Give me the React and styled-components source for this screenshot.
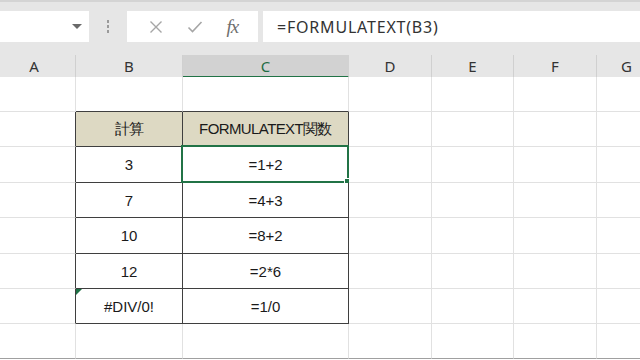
import React from "react";
import styled, { createGlobalStyle } from "styled-components";

const GlobalStyle = createGlobalStyle`
  html, body {
    margin: 0;
    padding: 0;
    background: #ffffff;
    overflow: hidden;
  }
  #root {
    width: 640px;
    height: 360px;
    overflow: hidden;
  }
`;

const Page = styled.div`
  width: 640px;
  height: 360px;
  display: flex;
  flex-direction: column;
  overflow: hidden;
  font-family: "Liberation Sans", Arial, sans-serif;
`;

const Toolbar = styled.div`
  height: 55px;
  flex: none;
  background: #e6e6e6;
  border-top: 2px solid #d4d4d4;
  display: flex;
  align-items: flex-start;
  padding-top: 9px;
  box-sizing: border-box;
`;

const NameBox = styled.div`
  flex: none;
  width: 89px;
  height: 31px;
  background: #ffffff;
  display: flex;
  align-items: center;
  justify-content: flex-end;
  padding-right: 7px;
  box-sizing: border-box;
`;

const Caret = styled.span`
  width: 0;
  height: 0;
  border-left: 5px solid transparent;
  border-right: 5px solid transparent;
  border-top: 5px solid #6a6a6a;
`;

const Grip = styled.div`
  flex: none;
  width: 38px;
  height: 31px;
  display: flex;
  flex-direction: column;
  align-items: center;
  justify-content: center;
  gap: 2px;
`;

const Dot = styled.span`
  width: 2px;
  height: 3px;
  background: #9a9a9a;
`;

const ButtonBox = styled.div`
  flex: none;
  width: 131px;
  height: 31px;
  background: #ffffff;
  display: flex;
  align-items: center;
  justify-content: space-around;
  padding: 0 8px 0 10px;
  box-sizing: border-box;
`;

const Fx = styled.span`
  font-family: "Liberation Serif", "DejaVu Serif", serif;
  font-style: italic;
  font-size: 19px;
  color: #6e6e6e;
  letter-spacing: -1px;
`;

const FormulaInput = styled.div`
  flex: 1;
  height: 31px;
  margin-left: 5px;
  background: #ffffff;
  display: flex;
  align-items: center;
  padding-left: 14px;
  font-family: "Noto Sans", "Open Sans", sans-serif;
  font-size: 16px;
  color: #333333;
  letter-spacing: 0.8px;
`;

const HeaderRow = styled.div`
  flex: none;
  display: grid;
  grid-template-columns: 83px 107px 166px 83px 82px 83px 60px;
  margin-left: -7px;
  height: 22px;
  background: #e6e6e6;
`;

const ColHead = styled.div`
  display: flex;
  align-items: center;
  justify-content: center;
  box-sizing: border-box;
  font-family: "Noto Sans", "Open Sans", sans-serif;
  font-size: 15px;
  color: ${(p) => (p.$active ? "#1e6b42" : "#333333")};
  background: ${(p) => (p.$active ? "#d2d2d2" : "transparent")};
  border-right: 1px solid ${(p) => (p.$active ? "#d2d2d2" : "#d0d0d0")};
  border-bottom: ${(p) => (p.$active ? "2px solid #217346" : "1px solid #ababab")};
  padding-top: ${(p) => (p.$active ? "1px" : "0")};
`;

const Grid = styled.div`
  flex: none;
  display: grid;
  grid-template-columns: 83px 107px 166px 83px 82px 83px 60px;
  grid-template-rows: 35px 35px 36px 35px 36px 35px 35px 35px;
  margin-left: -7px;
`;

const Cell = styled.div`
  position: relative;
  box-sizing: border-box;
  display: flex;
  align-items: center;
  justify-content: center;
  font-size: 15px;
  color: #1a1a1a;
  letter-spacing: ${(p) => (p.$head ? "-0.6px" : "0")};
  background: ${(p) => (p.$head ? "#ddd9c3" : "#ffffff")};
  border-right: 1px solid ${(p) => (p.$darkRight ? "#3f3f3f" : "#e1e1e1")};
  border-bottom: 1px solid
    ${(p) => (p.$darkBottom ? "#3f3f3f" : p.$last ? "#a0a0a0" : "#e1e1e1")};
`;

const Selection = styled.div`
  position: absolute;
  left: -2px;
  top: -2px;
  right: -1px;
  bottom: -1px;
  border: 2px solid #217346;
  pointer-events: none;
`;

const Handle = styled.span`
  position: absolute;
  right: -4px;
  bottom: -4px;
  width: 5px;
  height: 5px;
  background: #217346;
  border: 1px solid #ffffff;
`;

const ErrorMark = styled.span`
  position: absolute;
  left: 0;
  top: 0;
  width: 0;
  height: 0;
  border-top: 6px solid #1e7145;
  border-right: 6px solid transparent;
`;

const COLS = ["A", "B", "C", "D", "E", "F", "G"];

const TABLE = [
  ["計算", "FORMULATEXT関数"],
  ["3", "=1+2"],
  ["7", "=4+3"],
  ["10", "=8+2"],
  ["12", "=2*6"],
  ["#DIV/0!", "=1/0"],
];

function XIcon() {
  return (
    <svg width="14" height="14" viewBox="0 0 14 14">
      <path d="M1.5 1.5 L12.5 12.5 M12.5 1.5 L1.5 12.5" stroke="#a6a6a6" strokeWidth="1.4" fill="none" />
    </svg>
  );
}

function CheckIcon() {
  return (
    <svg width="16" height="14" viewBox="0 0 16 14">
      <path d="M1.5 7.5 L5.5 11.5 L14.5 2" stroke="#a6a6a6" strokeWidth="1.6" fill="none" />
    </svg>
  );
}

export default function App() {
  const rows = 8;
  return (
    <Page>
      <GlobalStyle />
      <Toolbar>
        <NameBox>
          <Caret />
        </NameBox>
        <Grip>
          <Dot />
          <Dot />
          <Dot />
        </Grip>
        <ButtonBox>
          <XIcon />
          <CheckIcon />
          <Fx>fx</Fx>
        </ButtonBox>
        <FormulaInput>=FORMULATEXT(B3)</FormulaInput>
      </Toolbar>
      <HeaderRow>
        {COLS.map((c) => (
          <ColHead key={c} $active={c === "C"}>
            {c}
          </ColHead>
        ))}
      </HeaderRow>
      <Grid>
        {Array.from({ length: rows }).map((_, r) =>
          COLS.map((c, ci) => {
            const tr = r - 1;
            const inTable = tr >= 0 && tr < TABLE.length && (ci === 1 || ci === 2);
            const text = inTable ? TABLE[tr][ci - 1] : "";
            const darkRight = inTable || (ci === 0 && tr >= 0 && tr < TABLE.length);
            const darkBottom = inTable || (r === 0 && (ci === 1 || ci === 2));
            return (
              <Cell
                key={c + r}
                $head={inTable && tr === 0}
                $darkRight={darkRight}
                $darkBottom={darkBottom}
                $last={r === rows - 1}
              >
                {text}
                {c === "C" && r === 2 && (
                  <Selection>
                    <Handle />
                  </Selection>
                )}
                {c === "B" && r === 6 && <ErrorMark />}
              </Cell>
            );
          })
        )}
      </Grid>
    </Page>
  );
}
